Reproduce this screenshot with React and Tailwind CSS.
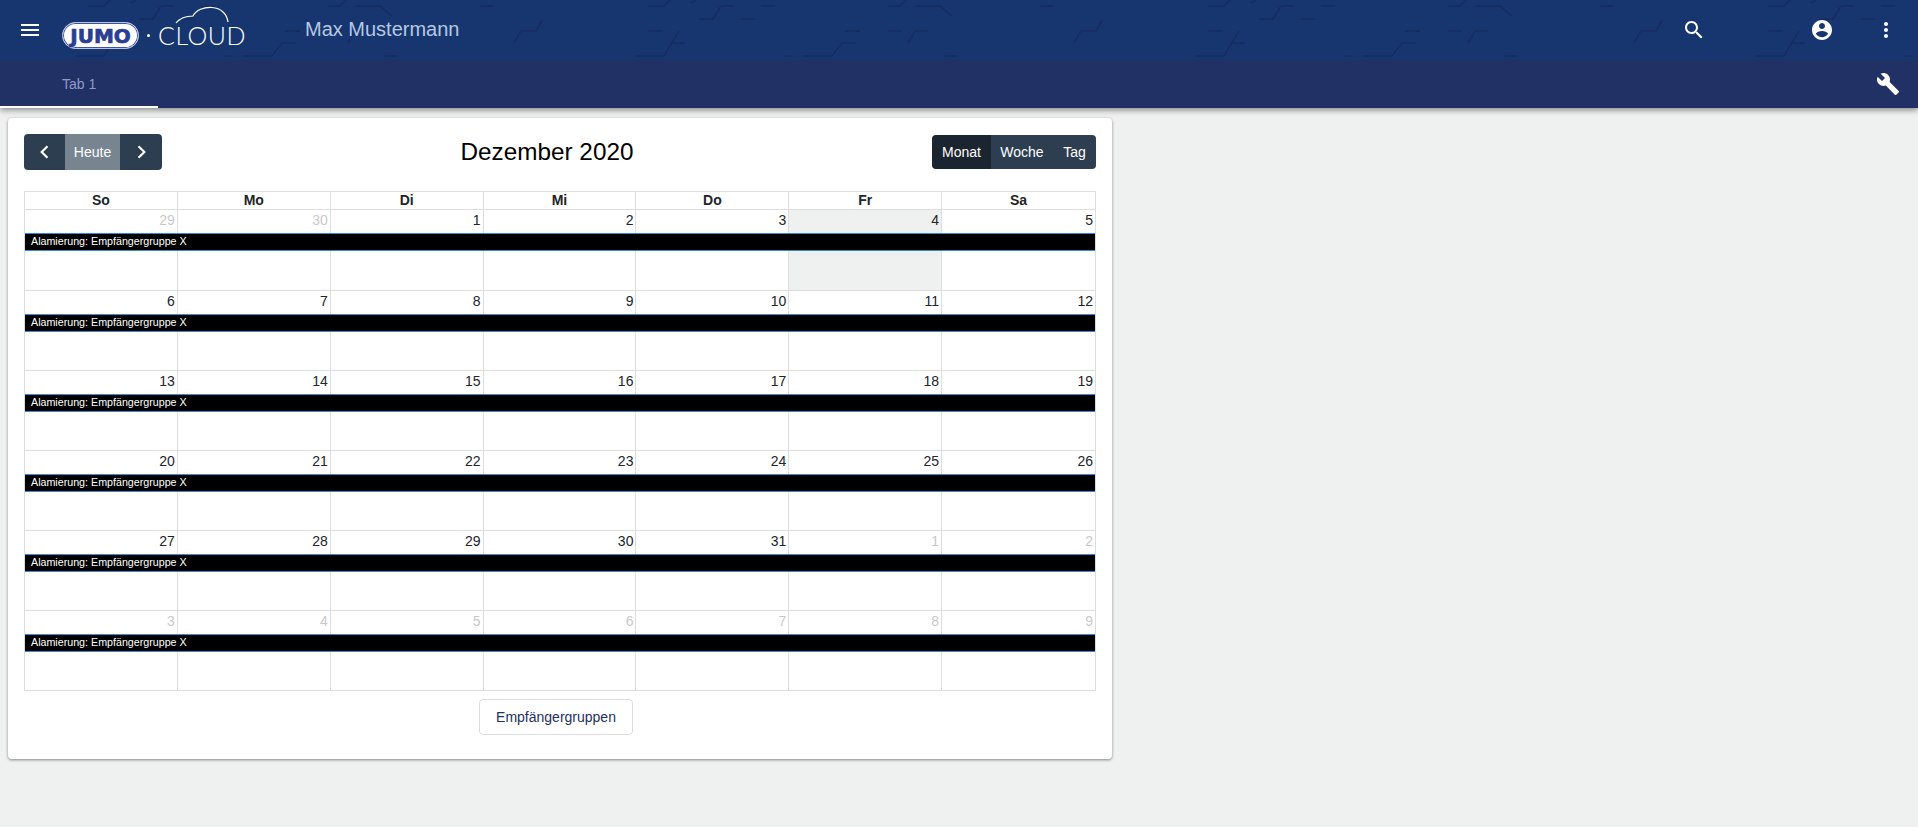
import React from 'react';

const weeks = [
  [[29, true], [30, true], [1], [2], [3], [4], [5]],
  [[6], [7], [8], [9], [10], [11], [12]],
  [[13], [14], [15], [16], [17], [18], [19]],
  [[20], [21], [22], [23], [24], [25], [26]],
  [[27], [28], [29], [30], [31], [1, true], [2, true]],
  [[3, true], [4, true], [5, true], [6, true], [7, true], [8, true], [9, true]],
];
const dayNames = ['So', 'Mo', 'Di', 'Mi', 'Do', 'Fr', 'Sa'];

// Material icon wrapper
function Icon({ d, className }) {
  return (
    <svg viewBox="0 0 24 24" fill="currentColor" className={className}>
      <path d={d} />
    </svg>
  );
}

const icons = {
  menu: 'M3 18h18v-2H3v2zm0-5h18v-2H3v2zm0-7v2h18V6H3z',
  search: 'M15.5 14h-.79l-.28-.27C15.41 12.59 16 11.11 16 9.5 16 5.91 13.09 3 9.5 3S3 5.91 3 9.5 5.91 16 9.5 16c1.61 0 3.09-.59 4.23-1.57l.27.28v.79l5 4.99L20.49 19l-4.99-5zm-6 0C7.01 14 5 11.99 5 9.5S7.01 5 9.5 5 14 7.01 14 9.5 11.99 14 9.5 14z',
  account: 'M12 2C6.48 2 2 6.48 2 12s4.48 10 10 10 10-4.48 10-10S17.52 2 12 2zm0 3c1.66 0 3 1.34 3 3s-1.34 3-3 3-3-1.34-3-3 1.34-3 3-3zm0 14.2c-2.5 0-4.71-1.28-6-3.22.03-1.99 4-3.08 6-3.08 1.99 0 5.97 1.09 6 3.08-1.29 1.94-3.5 3.22-6 3.22z',
  more: 'M12 8c1.1 0 2-.9 2-2s-.9-2-2-2-2 .9-2 2 .9 2 2 2zm0 2c-1.1 0-2 .9-2 2s.9 2 2 2 2-.9 2-2-.9-2-2-2zm0 6c-1.1 0-2 .9-2 2s.9 2 2 2 2-.9 2-2-.9-2-2-2z',
  build: 'M22.7 19l-9.1-9.1c.9-2.3.4-5-1.5-6.9-2-2-5-2.4-7.4-1.3L9 6 6 9 1.6 4.7C.4 7.1.9 10.1 2.9 12.1c1.9 1.9 4.6 2.4 6.9 1.5l9.1 9.1c.4.4 1 .4 1.4 0l2.3-2.3c.5-.4.5-1.1.1-1.4z',
};

function Logo() {
  return (
    <div className="flex items-center w-[184px] h-[50px] relative">
      <div className="w-[77px] h-[27px] mt-[11px] rounded-full bg-white border border-[#b9c4e0] shadow-[inset_0_0_0_1px_#3d529e] flex items-center justify-center text-[#2a3f92] text-[20px] font-bold leading-none font-['DejaVu_Sans',sans-serif] [-webkit-text-stroke:0.7px_#2a3f92]">
        JUMO
      </div>
      <div className="w-[3px] h-[3px] bg-white rounded-full ml-[8px] mt-[11px]" />
      <div className="ml-[8px] mt-[10px] text-white text-[25px] font-light leading-none tracking-[0.5px] font-['Lato',sans-serif]">
        CLOUD
      </div>
      <svg viewBox="0 0 70 26" fill="none" stroke="#ffffff" strokeWidth="1.2" className="absolute left-[112px] top-[1px] w-[70px] h-[26px]">
        <path d="M2 17 C6 12 13 10 19 10 C22 4 30 1 38 1.5 C47 2 53 8 54 16" />
      </svg>
    </div>
  );
}

// faint hexagon lines behind the toolbar, one tile is 560px wide
const patternTile = [
  'M34 43 L41 31 H56 L62 20',
  'M0 6 H13',
  'M168 6 H184 L190 0',
  'M211 3 L216 0',
  'M219 19 H233 L241 6 H254',
  'M261 19 H275',
  'M281 6 H295',
  'M168 31 H183',
  'M156 56 H184 L199 31',
  'M190 43 H205',
  'M305 56 H313',
  'M322 56 H352 L362 43 H376',
  'M365 31 H380',
  'M408 31 H422',
  'M428 43 L435 31 H448',
  'M408 6 H420 L426 0',
  'M436 6 H460 L472 16',
  'M464 56 H478',
].join(' ');

function Pattern() {
  return (
    <svg className="absolute inset-0 w-full h-full pointer-events-none" fill="none" stroke="#172c62" strokeWidth="1.5">
      {[-80, 480, 1040, 1600].map((x) => (
        <path key={x} d={patternTile} transform={`translate(${x} 0)`} />
      ))}
    </svg>
  );
}

function Week({ days, todayIndex, first }) {
  return (
    <div className={`grid grid-cols-7 border-t border-[#ddd] ${first ? 'grid-rows-[23px_18px_39px] h-[81px]' : 'grid-rows-[23px_18px_38px] h-[80px]'}`}>
      {days.map(([n, dim], i) => (
        <div
          key={i}
          style={{ gridColumnStart: i + 1 }}
          className={`row-start-1 row-span-3 pr-[2px] text-right text-sm leading-[21px] ${i < 6 ? 'border-r border-[#ddd]' : ''} ${i === todayIndex ? 'bg-[#eff0f0]' : ''} ${dim ? 'text-[#c9c9c9]' : 'text-[#212529]'}`}
        >
          {n}
        </div>
      ))}
      <div className="row-start-2 col-start-1 col-span-7 bg-black border-y border-[#3788d8] text-white text-[10.7px] leading-[15px] pl-[6px] z-10">
        Alamierung: Empfängergruppe X
      </div>
    </div>
  );
}

export default function App() {
  return (
    <div className="min-h-[827px] bg-[#eff1f1] font-['Liberation_Sans',Arial,sans-serif]">
      <header className="shadow-[0_2px_6px_rgba(0,0,0,0.45)] relative z-10">
        <div className="relative h-[60px] bg-[#17366f] flex items-center text-white overflow-hidden">
          <Pattern />
          <div className="relative flex items-center w-full h-full">
            <Icon d={icons.menu} className="w-6 h-6 ml-[18px]" />
            <div className="ml-[20px]"><Logo /></div>
            <span className="ml-[59px] mb-[2px] text-xl text-[#b5c8e4]">Max Mustermann</span>
            <Icon d={icons.search} className="w-6 h-6 ml-auto mr-[104px]" />
            <Icon d={icons.account} className="w-6 h-6 mr-[40px]" />
            <Icon d={icons.more} className="w-6 h-6 mr-[20px]" />
          </div>
        </div>
        <div className="h-[48px] bg-[#213165] flex items-center justify-between text-white">
          <div className="w-[158px] h-full border-b-2 border-white pl-[62px] pt-[14px] text-sm leading-[20px] text-[#8f9bc2]">Tab 1</div>
          <Icon d={icons.build} className="w-6 h-6 mr-[18px]" />
        </div>
      </header>

      <main className="pt-[10px] pl-[8px]">
        <section className="w-[1104px] h-[641px] bg-white rounded shadow-[0_1px_3px_rgba(0,0,0,0.45)] px-[16px] pt-[16px]">
          <div className="flex items-center justify-between h-[36px]">
            <div className="flex h-[36px] rounded overflow-hidden text-white text-sm">
              <button className="w-[41px] bg-[#2c3e50] flex items-center justify-center">
                <svg viewBox="0 0 24 24" fill="none" stroke="currentColor" strokeWidth="2.6" className="w-5 h-5"><path d="M15 5l-7 7 7 7" /></svg>
              </button>
              <button className="w-[55px] bg-[#78848f]">Heute</button>
              <button className="w-[42px] bg-[#2c3e50] flex items-center justify-center">
                <svg viewBox="0 0 24 24" fill="none" stroke="currentColor" strokeWidth="2.6" className="w-5 h-5"><path d="M9 5l7 7-7 7" /></svg>
              </button>
            </div>
            <h2 className="text-[24.3px] leading-8 text-black">Dezember 2020</h2>
            <div className="flex h-[34px] rounded overflow-hidden text-white text-sm">
              <button className="w-[59px] bg-[#1a252f]">Monat</button>
              <button className="w-[62px] bg-[#2c3e50]">Woche</button>
              <button className="w-[43px] bg-[#2c3e50]">Tag</button>
            </div>
          </div>

          <div className="mt-[21px] border border-[#ddd] w-[1072px]">
            <div className="grid grid-cols-7 h-[17px]">
              {dayNames.map((d, i) => (
                <div key={d} className={`text-center text-sm font-bold leading-[17px] text-[#212529] ${i < 6 ? 'border-r border-[#ddd]' : ''}`}>{d}</div>
              ))}
            </div>
            {weeks.map((days, i) => (
              <Week key={i} days={days} first={i === 0} todayIndex={i === 0 ? 5 : -1} />
            ))}
          </div>

          <div className="flex justify-center mt-[8px] w-[1064px]">
            <button className="w-[154px] h-[36px] border border-[#ddd] rounded text-sm text-[#213165] bg-white">Empfängergruppen</button>
          </div>
        </section>
      </main>
    </div>
  );
}
